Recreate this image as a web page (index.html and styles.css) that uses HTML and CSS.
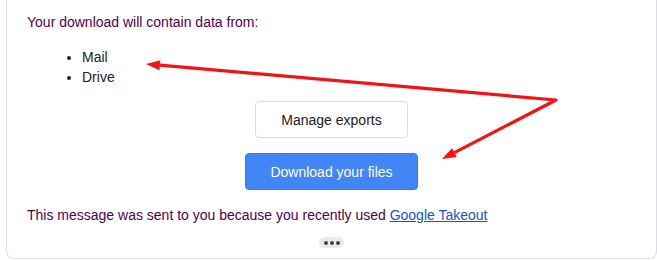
FILE: index.html
```html
<!DOCTYPE html>
<html lang="en">
<head>
    <meta charset="UTF-8">
    <title>Google Takeout</title>
    <link rel="stylesheet" href="styles.css">
</head>
<body>
    <div class="card">
        <p class="intro">Your download will contain data from:</p>
        <ul class="services">
            <li>Mail</li>
            <li>Drive</li>
        </ul>
        <div class="actions">
            <a class="btn btn-outline" href="#">Manage exports</a>
            <a class="btn btn-primary" href="#">Download your files</a>
        </div>
        <p class="footer">This message was sent to you because you recently used <a href="#">Google Takeout</a></p>
        <div class="more"><span></span><span></span><span></span></div>
    </div>

    <!-- annotation arrows drawn over the mail -->
    <svg class="arrows" width="657" height="261" viewBox="0 0 657 261">
        <polyline points="160,65.2 556,100 454.4,152.6" fill="none" stroke="#f51212" stroke-width="3.2" stroke-linejoin="round"/>
        <polygon points="146,64 160.4,60.2 159.5,70.2" fill="#f51212"/>
        <polygon points="442,159 456.7,157 452.1,148.2" fill="#f51212"/>
    </svg>
</body>
</html>
```

FILE: styles.css
```css
body {
    margin: 0;
    padding: 0;
    background: #fff;
    font-family: "Liberation Sans", Arial, sans-serif;
    font-size: 14px;
    line-height: 20px;
    position: relative;
}
.card {
    margin-left: 6px;
    width: 629px;
    border: 1px solid #dadce0;
    border-top: none;
    border-radius: 0 0 8px 8px;
    padding: 12px 0 10px 20px;
}
.intro {
    margin: 0 0 15px;
    color: #500050;
}
.services {
    margin: 0;
    padding-left: 55px;
    color: #222;
}
.actions {
    display: flex;
    flex-direction: column;
    align-items: center;
    gap: 15px;
    margin: 14px 0 0 -20px;
}
.btn {
    display: flex;
    align-items: center;
    justify-content: center;
    height: 37px;
    box-sizing: border-box;
    border-radius: 4px;
    text-decoration: none;
}
.btn-outline {
    width: 153px;
    border: 1px solid #dadce0;
    color: #202124;
    background: #fff;
}
.btn-primary {
    width: 173px;
    border: 1px solid #3a7ce6;
    color: #fff;
    background: #4285f4;
}
.footer {
    margin: 15px 0 0;
    color: #500050;
}
.footer a {
    color: #1155cc;
}
.more {
    display: flex;
    align-items: center;
    justify-content: center;
    gap: 2px;
    width: 25px;
    height: 11px;
    margin: 12px auto 0;
    position: relative;
    left: -10px;
    border-radius: 6px;
    background: #e8eaed;
}
.more span {
    width: 4px;
    height: 4px;
    border-radius: 50%;
    background: #444;
}
.arrows {
    position: absolute;
    top: 0;
    left: 0;
    pointer-events: none;
}
```
